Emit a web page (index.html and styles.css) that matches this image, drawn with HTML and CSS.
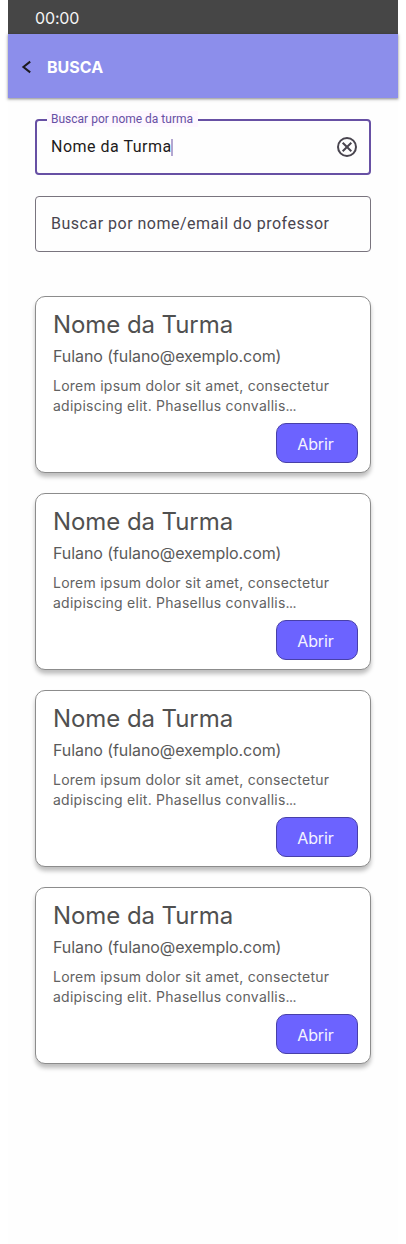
FILE: index.html
```html
<!DOCTYPE html>
<html lang="pt-BR">
<head>
<meta charset="utf-8">
<title>Busca</title>
<link rel="stylesheet" href="styles.css">
</head>
<body>
<div class="screen">
  <div class="status-bar"><span class="clock">00:00</span></div>
  <header class="app-bar">
    <svg class="back-icon" width="10" height="14" viewBox="0 0 10 14"><path d="M9.2 1.6 2.4 7l6.8 5.4" fill="none" stroke="#1d1b20" stroke-width="2"/></svg>
    <h1 class="app-title">BUSCA</h1>
  </header>
  <main class="content">
    <div class="field field-active">
      <span class="field-label">Buscar por nome da turma</span>
      <span class="field-value">Nome da Turma</span><span class="caret"></span>
      <svg class="clear-icon" width="24" height="24" viewBox="0 0 24 24" fill="none" stroke="#49454f" stroke-width="2"><circle cx="12" cy="12" r="9"/><path d="M7.7 7.7l8.6 8.6M16.3 7.7l-8.6 8.6"/></svg>
    </div>
    <div class="field"><span class="field-placeholder">Buscar por nome/email do professor</span></div>
    <section class="cards">
      <article class="card">
        <h2 class="card-title">Nome da Turma</h2>
        <p class="card-teacher">Fulano (fulano@exemplo.com)</p>
        <p class="card-text">Lorem ipsum dolor sit amet, consectetur<br>adipiscing elit. Phasellus convallis<span class="dots">...</span></p>
        <button class="open-button">Abrir</button>
      </article>
      <article class="card">
        <h2 class="card-title">Nome da Turma</h2>
        <p class="card-teacher">Fulano (fulano@exemplo.com)</p>
        <p class="card-text">Lorem ipsum dolor sit amet, consectetur<br>adipiscing elit. Phasellus convallis<span class="dots">...</span></p>
        <button class="open-button">Abrir</button>
      </article>
      <article class="card">
        <h2 class="card-title">Nome da Turma</h2>
        <p class="card-teacher">Fulano (fulano@exemplo.com)</p>
        <p class="card-text">Lorem ipsum dolor sit amet, consectetur<br>adipiscing elit. Phasellus convallis<span class="dots">...</span></p>
        <button class="open-button">Abrir</button>
      </article>
      <article class="card">
        <h2 class="card-title">Nome da Turma</h2>
        <p class="card-teacher">Fulano (fulano@exemplo.com)</p>
        <p class="card-text">Lorem ipsum dolor sit amet, consectetur<br>adipiscing elit. Phasellus convallis<span class="dots">...</span></p>
        <button class="open-button">Abrir</button>
      </article>
    </section>
  </main>
</div>
</body>
</html>
```
FILE: styles.css
```css
* { box-sizing: border-box; }
body { margin: 0; background: #fff; font-family: Inter, sans-serif; }
h1, h2, p { margin: 0; font-weight: 400; }
.screen { width: 390px; height: 1244px; margin: 0 8px; background: #fefefe; }
.status-bar { height: 34px; padding: 2px 27px 0; display: flex; align-items: center; background: #464646; }
.clock { color: #f4f4f4; font-size: 16px; line-height: 24px; letter-spacing: -.15px; }
.app-bar { height: 64px; padding: 2px 13px 0; display: flex; align-items: center; gap: 16px; background: #8c8eeb; box-shadow: 0 1px 2px rgba(0, 0, 0, .3), 0 1px 3px 1px rgba(0, 0, 0, .15); }
.app-title { color: #fff; font-size: 16px; line-height: 24px; font-weight: 700; }
.content { padding: 21px 27px 0; }
.field { position: relative; height: 56px; margin-bottom: 21px; padding: 0 15px; display: flex; align-items: center; border: 1px solid #79747e; border-radius: 4px; font-family: Roboto, sans-serif; font-size: 16px; line-height: 24px; letter-spacing: .5px; }
.field-active { padding: 0 11px 0 14px; border: 2px solid #6750a4; }
.field-label { position: absolute; left: 10px; top: -10px; padding: 0 5px 0 4px; background: #fef7ff; color: #6750a4; font-size: 12px; line-height: 16px; letter-spacing: 0; }
.field-value { color: #1d1b20; }
.field-placeholder { color: #49454f; }
.caret { width: 2px; height: 17px; margin-left: -1px; background: #b3a7d1; }
.clear-icon { margin-left: auto; margin-right: -1px; }
.cards { padding-top: 23px; display: flex; flex-direction: column; gap: 20px; }
.card { height: 177px; padding: 12px 12px 9px 17px; display: flex; flex-direction: column; background: #fff; border: 1px solid #8c8c8c; border-radius: 10px; box-shadow: 0 4px 4px rgba(0, 0, 0, .25); }
.card-title { color: #505050; font-size: 24px; line-height: 32px; letter-spacing: -.07px; }
.card-teacher { margin-top: 3px; color: #5a5a5a; font-size: 16px; line-height: 24px; letter-spacing: -.08px; }
.card-text { margin-top: 8px; color: #626262; font-size: 14px; line-height: 20px; letter-spacing: .25px; }
.dots { letter-spacing: -.6px; }
.open-button { align-self: flex-end; margin-top: auto; width: 82px; height: 40px; padding: 2px 3px 0 0; border: 1px solid #4840a8; border-radius: 10px; background: #6c63ff; color: #f4f3ff; font: 16px/24px Inter, sans-serif; letter-spacing: -.1px; }
```
